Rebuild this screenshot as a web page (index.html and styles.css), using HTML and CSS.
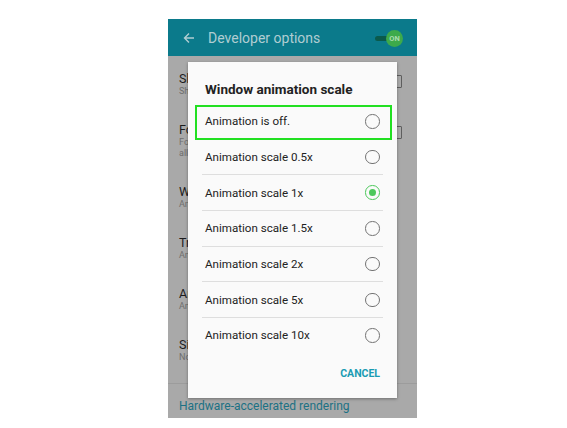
FILE: index.html
```html
<!DOCTYPE html>
<html lang="en">
<head>
  <meta charset="UTF-8" />
  <meta name="viewport" content="width=device-width, initial-scale=1.0"/>
  <title>Developer options</title>
  <link rel="stylesheet" href="styles.css">
</head>
<body>
  <div class="screen">
    <div class="appbar">
      <svg class="back" width="12" height="12" viewBox="0 0 12 12">
        <path d="M11 6H1.5M6 1.5L1.5 6L6 10.5" fill="none" stroke="currentColor" stroke-width="1.4"/>
      </svg>
      <span class="appbar-title">Developer options</span>
      <div class="switch">
        <span class="track"></span>
        <span class="knob">ON</span>
      </div>
    </div>

    <div class="list">
      <div class="item">
        <div class="item-text">
          <div class="item-title">Show taps</div>
          <div class="item-sub">Show visual feedback for taps</div>
        </div>
        <span class="checkbox"></span>
      </div>
      <div class="item">
        <div class="item-text">
          <div class="item-title">Force GPU rendering</div>
          <div class="item-sub">Force use of GPU for 2D drawing in</div>
          <div class="item-sub">all applications</div>
        </div>
        <span class="checkbox"></span>
      </div>
      <div class="item">
        <div class="item-text">
          <div class="item-title">Window animation scale</div>
          <div class="item-sub">Animation scale 1x</div>
        </div>
      </div>
      <div class="item">
        <div class="item-text">
          <div class="item-title">Transition animation scale</div>
          <div class="item-sub">Animation scale 1x</div>
        </div>
      </div>
      <div class="item">
        <div class="item-text">
          <div class="item-title">Animator duration scale</div>
          <div class="item-sub">Animation scale 1x</div>
        </div>
      </div>
      <div class="item last">
        <div class="item-text">
          <div class="item-title">Simulate secondary displays</div>
          <div class="item-sub">None</div>
        </div>
      </div>
      <div class="category">Hardware-accelerated rendering</div>
    </div>

    <div class="dialog">
      <div class="dialog-title">Window animation scale</div>
      <div class="options">
        <div class="option"><span>Animation is off.</span><span class="radio"></span></div>
        <div class="option"><span>Animation scale 0.5x</span><span class="radio"></span></div>
        <div class="option"><span>Animation scale 1x</span><span class="radio checked"></span></div>
        <div class="option"><span>Animation scale 1.5x</span><span class="radio"></span></div>
        <div class="option"><span>Animation scale 2x</span><span class="radio"></span></div>
        <div class="option"><span>Animation scale 5x</span><span class="radio"></span></div>
        <div class="option"><span>Animation scale 10x</span><span class="radio"></span></div>
      </div>
      <div class="actions">
        <span class="cancel">CANCEL</span>
      </div>
      <div class="highlight"></div>
    </div>
  </div>
</body>
</html>
```

FILE: styles.css
```css
body {
  margin: 0;
  background: #fff;
  font-family: Roboto, 'Noto Sans', sans-serif;
  width: 567px;
  height: 428px;
  overflow: hidden;
}
.screen {
  position: relative;
  width: 249px;
  height: 399px;
  margin: 19px 0 0 168px;
  background: #a9a9a9;
  overflow: hidden;
}
.appbar {
  height: 37px;
  background: #0b7a8b;
  display: flex;
  align-items: center;
  padding: 0 0 0 15px;
  color: #b0cdd2;
}
.back {
  display: block;
}
.appbar-title {
  font-size: 14px;
  margin-left: 13px;
  flex: 1;
}
.switch {
  position: relative;
  width: 40px;
  height: 18px;
  margin-right: 2px;
}
.track {
  position: absolute;
  left: 0;
  top: 7px;
  width: 20px;
  height: 5px;
  border-radius: 3px;
  background: #0a5a4c;
}
.knob {
  position: absolute;
  left: 11px;
  top: 1px;
  width: 17px;
  height: 17px;
  border-radius: 50%;
  background: #3daa4b;
  color: #a9dcae;
  font-size: 7.5px;
  font-weight: bold;
  line-height: 17px;
  text-align: center;
}
.list {
  padding-left: 11px;
}
.item {
  display: flex;
  padding: 16px 15px 10px 0;
}
.item.last {
  padding-bottom: 20px;
  border-bottom: 1px solid #9c9c9c;
  margin-left: -11px;
  padding-left: 11px;
}
.item-text {
  flex: 1;
  white-space: nowrap;
}
.item-title {
  font-size: 12.5px;
  line-height: 14px;
  color: #1c1c1c;
}
.item-sub {
  font-size: 9px;
  line-height: 11px;
  color: #6e6e6e;
}
.checkbox {
  width: 11px;
  height: 11px;
  margin-left: auto;
  border: 1.5px solid #5e5e5e;
  border-radius: 1px;
  margin-top: 3px;
}
.category {
  font-size: 12px;
  color: #1c7184;
  padding-top: 15px;
  line-height: 14px;
}
.dialog {
  position: absolute;
  left: 20px;
  top: 43px;
  width: 209px;
  height: 336px;
  background: #fafafa;
  box-shadow: 0 1px 3px rgba(0, 0, 0, 0.35);
}
.dialog-title {
  font-size: 13.5px;
  font-weight: bold;
  color: #222;
  line-height: 16px;
  padding: 19px 0 7px 17px;
}
.options {
  padding: 0 14px;
}
.option {
  height: 34.7px;
  border-bottom: 1px solid #dedede;
  display: flex;
  align-items: center;
  justify-content: space-between;
  padding: 0 3.5px 0 3px;
  font-size: 11.6px;
  color: #222;
}
.option:last-child {
  border-bottom: none;
}
.radio {
  width: 12.5px;
  height: 12.5px;
  border: 1.4px solid #737373;
  border-radius: 50%;
  position: relative;
}
.radio.checked {
  border-color: #4cc85b;
}
.radio.checked::after {
  content: "";
  position: absolute;
  left: 2.5px;
  top: 2.5px;
  width: 7.5px;
  height: 7.5px;
  border-radius: 50%;
  background: #4cc85b;
}
.actions {
  display: flex;
  justify-content: flex-end;
  padding: 14px 17px 0 0;
}
.cancel {
  font-size: 10.5px;
  font-weight: bold;
  color: #1a9cb3;
  line-height: 14px;
}
.highlight {
  position: absolute;
  left: 7px;
  top: 43px;
  width: 193px;
  height: 31px;
  border: 2px solid #22e022;
}
```
